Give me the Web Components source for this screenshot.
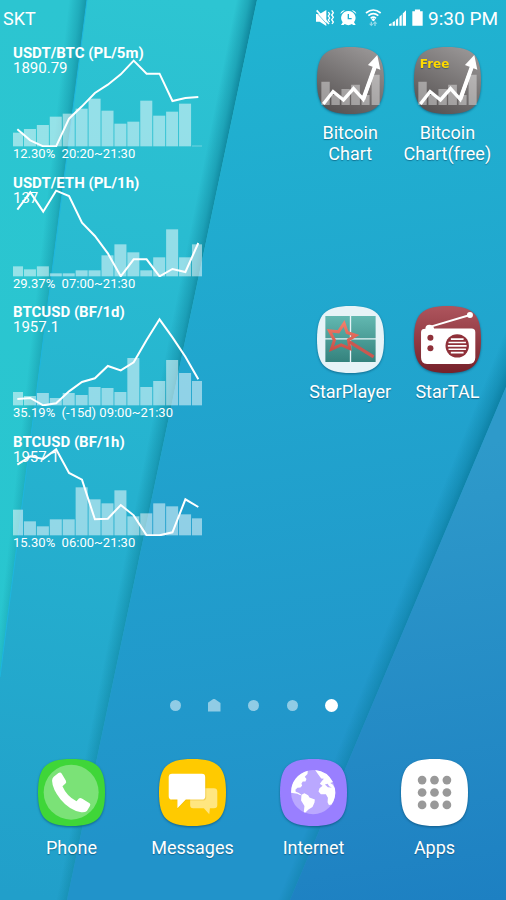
<!DOCTYPE html>
<html lang="en">
<head>
<meta charset="utf-8">
<meta name="viewport" content="width=device-width, initial-scale=1">
<title>Home</title>
<style>
body {
	margin: 0;
	font-family: Roboto, "Liberation Sans", sans-serif;
	color: white;
}
</style>
</head>
<body>
<home-screen>
	<home-wallpaper slot="wallpaper"></home-wallpaper>
	<status-bar slot="status" carrier="SKT" time="9:30 PM"></status-bar>

	<chart-widget style="grid-area: 1 / 1 / 2 / 3"
		bars="41 52 64 89 98 113 143 107 68 74 137 92 104 128 2"
		line="51 18 0 0 83 120 160 185 216 257 218 218 136 145 148">
		<span slot="title">USDT/BTC (PL/5m)</span>
		<span slot="price">1890.79</span>
		<span slot="range">12.30%&nbsp; 20:20~21:30</span>
	</chart-widget>
	<chart-widget style="grid-area: 2 / 1 / 3 / 3"
		bars="30 21 30 9 9 18 18 63 96 72 18 57 141 57 96"
		line="200 252 194 257 241 161 121 69 0 51 51 0 22 13 100">
		<span slot="title">USDT/ETH (PL/1h)</span>
		<span slot="price">137</span>
		<span slot="range">29.37%&nbsp; 07:00~21:30</span>
	</chart-widget>
	<chart-widget style="grid-area: 3 / 1 / 4 / 3"
		bars="40 28 37 22 37 31 55 52 40 142 55 73 136 97 73"
		line="19 22 0 6 42 70 81 118 105 129 196 258 204 146 78">
		<span slot="title">BTCUSD (BF/1d)</span>
		<span slot="price">1957.1</span>
		<span slot="range">35.19%&nbsp; (-15d) 09:00~21:30</span>
	</chart-widget>
	<chart-widget style="grid-area: 4 / 1 / 5 / 3"
		bars="77 42 27 48 48 144 108 96 135 57 66 96 87 63 51"
		line="212 237 229 258 187 167 48 50 91 60 0 0 9 108 85">
		<span slot="title">BTCUSD (BF/1h)</span>
		<span slot="price">1957.1</span>
		<span slot="range">15.30%&nbsp; 06:00~21:30</span>
	</chart-widget>

	<app-icon icon="chart" style="grid-area: 1 / 4">Bitcoin<br>Chart</app-icon>
	<app-icon icon="chartFree" style="grid-area: 1 / 5">Bitcoin<br>Chart(free)</app-icon>
	<app-icon icon="star" style="grid-area: 3 / 4">StarPlayer</app-icon>
	<app-icon icon="radio" style="grid-area: 3 / 5">StarTAL</app-icon>

	<page-indicator slot="pages" count="5" home="2" current="5"></page-indicator>

	<app-icon slot="dock" icon="phone">Phone</app-icon>
	<app-icon slot="dock" icon="messages">Messages</app-icon>
	<app-icon slot="dock" icon="internet">Internet</app-icon>
	<app-icon slot="dock" icon="apps">Apps</app-icon>
</home-screen>

<script>
const template = (html) => {
	const element = document.createElement("template")
	element.innerHTML = html
	return element
}

const templateScreen = template(`
<style>
:host {
	display: grid;
	min-height: 100vh;
	overflow: hidden;
}

.layer {
	grid-area: 1 / 1;
	display: grid;
	min-width: 0;
}

.content {
	grid-template-rows: auto 1fr 42px 174px;
	z-index: 1;
}

main {
	display: grid;
	grid-template-columns: repeat(5, minmax(0, 1fr));
	grid-template-rows: repeat(5, minmax(129px, 1fr));
	padding: 0 10px;
}

nav {
	--label-gap: 11px;
	display: grid;
	grid-template-columns: repeat(4, minmax(0, 1fr));
	padding: 22px 11px 0;
}
</style>
<div class="layer"><slot name="wallpaper"></slot></div>
<div class="layer content">
	<slot name="status"></slot>
	<main><slot></slot></main>
	<slot name="pages"></slot>
	<nav><slot name="dock"></slot></nav>
</div>
`)

// folded paper sheets, each one dropping a shadow on the sheet to its left
const templateWallpaper = template(`
<style>
:host {
	display: grid;
	contain: size;
}

svg {
	width: 100%;
	height: 100%;
}
</style>
<svg viewBox="0 0 506 900" preserveAspectRatio="none" aria-hidden="true">
	<defs>
		<linearGradient id="sheet1" gradientUnits="userSpaceOnUse" x1="0" y1="0" x2="0" y2="680">
			<stop offset="0" stop-color="#2cc5d1"/>
			<stop offset="1" stop-color="#28c6cf"/>
		</linearGradient>
		<linearGradient id="sheet2" gradientUnits="userSpaceOnUse" x1="180" y1="0" x2="60" y2="900">
			<stop offset="0" stop-color="#2dc5d2"/>
			<stop offset=".45" stop-color="#26b5d0"/>
			<stop offset="1" stop-color="#219fca"/>
		</linearGradient>
		<linearGradient id="sheet3" gradientUnits="userSpaceOnUse" x1="300" y1="0" x2="420" y2="800">
			<stop offset="0" stop-color="#20b4d1"/>
			<stop offset="1" stop-color="#2193ca"/>
		</linearGradient>
		<linearGradient id="sheet4" gradientUnits="userSpaceOnUse" x1="440" y1="450" x2="510" y2="900">
			<stop offset="0" stop-color="#2e9aca"/>
			<stop offset="1" stop-color="#1d80c2"/>
		</linearGradient>
		<linearGradient id="shade1" gradientUnits="userSpaceOnUse" x1="87" y1="0" x2="69" y2="-2">
			<stop offset="0" stop-color="#0b8297" stop-opacity=".7"/>
			<stop offset=".4" stop-color="#0b8297" stop-opacity=".35"/>
			<stop offset="1" stop-color="#0b8297" stop-opacity="0"/>
		</linearGradient>
		<linearGradient id="shade2" gradientUnits="userSpaceOnUse" x1="257" y1="0" x2="237" y2="-4">
			<stop offset="0" stop-color="#097a92" stop-opacity=".85"/>
			<stop offset=".4" stop-color="#097a92" stop-opacity=".4"/>
			<stop offset="1" stop-color="#097a92" stop-opacity="0"/>
		</linearGradient>
		<linearGradient id="shade3" gradientUnits="userSpaceOnUse" x1="506" y1="387" x2="486" y2="379">
			<stop offset="0" stop-color="#08789a" stop-opacity=".8"/>
			<stop offset=".4" stop-color="#08789a" stop-opacity=".4"/>
			<stop offset="1" stop-color="#08789a" stop-opacity="0"/>
		</linearGradient>
	</defs>
	<path fill="url(#sheet1)" d="M0 0H90V700H0Z"/>
	<path fill="url(#shade1)" d="M87 0L0 677L-24 677L63 0Z"/>
	<path fill="url(#sheet2)" d="M87 0H260V900H-29Z"/>
	<path stroke="#1eb6de" stroke-width="1" d="M87 0L0 677"/>
	<path fill="url(#shade2)" d="M257 0L67 900H41L231 0Z"/>
	<path fill="url(#sheet3)" d="M257 0H506V900H67Z"/>
	<path fill="url(#shade3)" d="M669 0L290 900H262L641 0Z"/>
	<path fill="url(#sheet4)" d="M506 387V900H290Z"/>
</svg>
`)

const templateStatus = template(`
<style>
:host {
	display: flex;
	align-items: center;
	height: 36px;
	padding: 0 8px 0 3px;
	font-size: 18px;
}

[data-carrier] {
	margin-right: auto;
}

[data-time] {
	font-size: 19px;
}

.icons {
	display: flex;
	gap: 6px;
	margin-right: 5px;
}

svg {
	height: 18px;
	fill: white;
}
</style>
<span data-carrier></span>
<div class="icons">
	<svg viewBox="0 0 54 54" width="18" role="img" aria-label="Vibrate">
		<path d="M0 15H11L31 3V51L11 38H0Z"/>
		<path d="M0 9L35 48" stroke="#20b0d1" stroke-width="2"/>
		<path d="M2 4L39 45" stroke="white" stroke-width="5"/>
		<path d="M37 9l4 6l-4 6l4 6l-4 6l4 6M47 4l5 7l-5 7l5 7l-5 7l5 7l-4 6" fill="none" stroke="white" stroke-width="4"/>
	</svg>
	<svg viewBox="0 0 51 54" width="17" role="img" aria-label="Alarm">
		<path d="M25 6a21 21 0 0 1 17 34l5 8h-8l-3-3a21 21 0 0 1-22 0l-3 3H3l5-8A21 21 0 0 1 25 6Z"/>
		<path d="M1 15Q4 4 15 4ZM49 15Q46 4 35 4Z"/>
		<path d="M25 15V29H35" fill="none" stroke="#20b0d1" stroke-width="4"/>
	</svg>
	<svg viewBox="0 0 60 54" width="20" role="img" aria-label="Wi-Fi">
		<path d="M9 12Q31-6 53 12M16 20Q31 8 46 20M23 28Q31 21 39 28" fill="none" stroke="white" stroke-width="5"/>
		<path d="M31 27l6 5l-6 5l-6-5Z"/>
		<path d="M25 38V45M36 43V51" stroke="#90d8e8" stroke-width="4"/>
		<path d="M18 44h14l-7 8ZM29 44h14l-7-8Z" fill="#90d8e8"/>
	</svg>
	<svg viewBox="0 0 52 54" width="17" role="img" aria-label="Signal">
		<path d="M0 51V46L8 43V51ZM11 51V40L18 36V51ZM21 51V33L28 27V51ZM32 51V23L39 16V51ZM42 51V13L52 3V51Z"/>
	</svg>
	<svg viewBox="0 0 34 54" width="11" role="img" aria-label="Battery">
		<path d="M1 6H9V1H25V6H33V51H1Z"/>
	</svg>
</div>
<time data-time></time>
`)

const templateChart = template(`
<style>
:host {
	display: grid;
	grid-template-rows: 102px 14px;
	align-content: start;
	padding: 9px 2px 0 3px;
}

.header {
	grid-area: 1 / 1;
	z-index: 1;
}

.title {
	font-size: 15px;
	line-height: 16px;
	font-weight: bold;
}

.price {
	font-size: 15px;
	line-height: 15px;
}

.range {
	font-size: 13px;
	line-height: 13px;
	white-space: nowrap;
}

svg {
	grid-area: 1 / 1;
	align-self: end;
	width: 100%;
	height: 90px;
}

rect {
	fill: white;
	fill-opacity: .5;
}

polyline {
	fill: none;
	stroke: white;
	stroke-width: 6;
}
</style>
<div class="header">
	<div class="title"><slot name="title"></slot></div>
	<div class="price"><slot name="price"></slot></div>
</div>
<svg viewBox="0 0 567 270" preserveAspectRatio="none" aria-hidden="true">
	<g data-bars></g>
	<polyline data-line></polyline>
</svg>
<div class="range"><slot name="range"></slot></div>
`)

const templateApp = template(`
<style>
:host {
	display: block;
	min-width: 0;
}

button {
	display: flex;
	flex-direction: column;
	align-items: center;
	gap: var(--label-gap, 8px);
	width: 100%;
	padding: 11px 0 0;
	border: 0;
	background: none;
	color: inherit;
	font: inherit;
	font-size: 18px;
	line-height: 21px;
	text-shadow: 0 1px 1px rgb(0 60 90 / .5);
	cursor: pointer;
}

svg {
	width: 67px;
	height: 67px;
	overflow: visible;
	filter: drop-shadow(0 1px 1px rgb(0 50 80 / .5));
}

span {
	white-space: nowrap;
}
</style>
<button type="button">
	<svg viewBox="0 0 200 200" aria-hidden="true"></svg>
	<span><slot></slot></span>
</button>
`)

const templatePages = template(`
<style>
:host {
	display: flex;
	justify-content: center;
	align-items: center;
	gap: 25px;
}

button {
	display: grid;
	place-items: center;
	width: 14px;
	height: 14px;
	padding: 0;
	border: 0;
	background: none;
	cursor: pointer;
}

button::before {
	content: '';
	width: 11px;
	height: 11px;
	border-radius: 50%;
	background: white;
	opacity: .5;
}

.home::before {
	width: 13px;
	height: 13px;
	border-radius: 0;
	clip-path: polygon(50% 0, 100% 35%, 100% 100%, 0 100%, 0 35%);
}

.current::before {
	width: 13px;
	height: 13px;
	opacity: 1;
}
</style>
`)

const squircle = (fill) =>
	`<path fill="${fill}" d="M100 0C176 0 200 24 200 100S176 200 100 200S0 176 0 100S24 0 100 0Z"/>`

const chartArt = `
<defs><linearGradient id="bg" x1=".8" y1="0" x2=".3" y2="1">
	<stop offset="0" stop-color="#9a9797"/><stop offset="1" stop-color="#575353"/>
</linearGradient></defs>
${squircle("url(#bg)")}
<path fill="white" fill-opacity=".4" d="M13 104H38V173H13ZM43 143H68V173H43ZM73 125H98V173H73ZM102 113H128V173H102ZM133 143H157V173H133ZM163 83H187V173H163Z"/>
<path fill="none" stroke="white" stroke-width="10" d="M19 170L48 133L79 158L109 124L138 156L174 56"/>
<path fill="white" d="M180 24L189 68L152 54Z"/>
<path fill="none" stroke="white" stroke-width="12" d="M138 156L173 58"/>
`

const icons = {
	chart: chartArt,
	chartFree: `${chartArt}
<text x="17" y="64" fill="#ffd900" font-family="DejaVu Sans, sans-serif" font-weight="bold" font-size="36">Free</text>`,
	star: `
<defs><linearGradient id="tile" x1="0" y1="0" x2="0" y2="1">
	<stop offset="0" stop-color="#62b8b1"/><stop offset="1" stop-color="#34827d"/>
</linearGradient>
<linearGradient id="wand" x1="0" y1="0" x2="0" y2="1">
	<stop offset="0" stop-color="#f37d68"/><stop offset="1" stop-color="#ca5149"/>
</linearGradient></defs>
${squircle("#e6f3f7")}
<path fill="url(#tile)" d="M25 30H98V96H25ZM102 30H175V96H102ZM25 100H98V167H25ZM102 100H175V167H102Z"/>
<path fill="none" stroke="url(#wand)" stroke-width="9" d="M81 52L90 79L116 88L94 101L98 127L72 116L43 129L52 102L37 74L64 77Z"/>
<path stroke="#cb5850" stroke-width="10" d="M97 107L169 152"/>`,
	radio: `
<defs><linearGradient id="bg" x1="0" y1="0" x2="0" y2="1">
	<stop offset="0" stop-color="#ae555d"/><stop offset="1" stop-color="#76212a"/>
</linearGradient></defs>
${squircle("url(#bg)")}
<path stroke="white" stroke-width="6" d="M45 63L167 27"/>
<circle cx="167" cy="27" r="9" fill="white"/>
<path fill="white" d="M34 68Q34 56 46 56Q57 56 60 67H172Q183 67 183 78V154Q183 173 164 173H39Q21 173 21 154V78Q21 68 34 68Z"/>
<g fill="#8f3039"><circle cx="49" cy="95" r="9"/><circle cx="49" cy="126" r="9"/><circle cx="129" cy="119" r="35"/></g>
<path stroke="white" stroke-width="5" d="M110 99H148M103 109H155M101 119H157M103 129H155M110 139H148"/>`,
	phone: `
${squircle("#3fd638")}
<circle cx="99" cy="99" r="82" fill="#7be277"/>
<path fill="white" d="M61 42Q67 38 71 44L83 64Q86 70 82 73L73 81Q86 111 115 126L122 118Q126 115 131 118L154 132Q158 135 155 140L146 155Q141 160 129 159Q94 153 67 120Q43 90 42 65Q42 58 47 53Z"/>`,
	messages: `
${squircle("#ffca00")}
<path fill="#ffe680" d="M103 87H164Q174 87 174 97V138Q174 147 164 147H152L150 165L134 147H102Q93 147 93 138V97Z"/>
<path fill="#dfa900" fill-opacity=".35" d="M39 47H130Q141 47 141 57V114Q141 124 130 124H80L55 150V124H39Z"/>
<path fill="white" d="M39 44H128Q138 44 138 54V111Q138 121 128 121H80L55 147V121H39Q29 121 29 111V54Q29 44 39 44Z"/>`,
	internet: `
${squircle("#997fff")}
<circle cx="99" cy="99" r="66" fill="#baa8ff"/>
<g fill="white">
	<path d="M33 99A66 66 0 0 1 83 35L82 45L74 53L79 60L76 67L68 67L64 73L66 80L61 85L52 86L46 92L47 98L55 101L63 106L61 108L52 104L33 101Z"/>
	<path d="M64 107L73 102L84 108L88 115L104 121L103 130L97 143L85 151L76 160L71 159L73 140L63 124Z"/>
	<path d="M105 33A66 66 0 0 1 158 69L150 72L158 77L164 88A66 66 0 0 1 154 136L146 137L142 129L143 116L137 105L122 105L115 97L118 87L127 80L119 74L125 66L131 59L123 58L117 50L111 42Z"/>
</g>
<path fill="#baa8ff" d="M134 76L142 74L147 81L155 85L143 84Z"/>`,
	apps: `
${squircle("white")}
<g fill="#999">${[63, 100, 137].map((y) =>
	[63, 100, 137].map((x) => `<circle cx="${x}" cy="${y}" r="13"/>`).join("")).join("")}</g>`,
}

class BaseElement extends HTMLElement {
	constructor(content) {
		super()
		this.attachShadow({ mode: "open" })
		this.shadowRoot.appendChild(content.content.cloneNode(true))
	}

	find(selector) {
		return this.shadowRoot.querySelector(selector)
	}
}

class HomeScreen extends BaseElement {
	constructor() {
		super(templateScreen)
	}
}

class HomeWallpaper extends BaseElement {
	constructor() {
		super(templateWallpaper)
	}
}

class StatusBar extends BaseElement {
	constructor() {
		super(templateStatus)
	}

	connectedCallback() {
		this.find("[data-carrier]").textContent = this.getAttribute("carrier")
		this.find("[data-time]").textContent = this.getAttribute("time")
	}
}

class ChartWidget extends BaseElement {
	constructor() {
		super(templateChart)
	}

	values(name) {
		return this.getAttribute(name).split(" ").map(Number)
	}

	connectedCallback() {
		const base = 268
		const step = 38.7
		// first and last bars are cut by the edge of the chart
		this.find("[data-bars]").innerHTML = this.values("bars")
			.map((h, i) => `<rect x="${i * step - 6}" y="${base - h}" width="36" height="${h}"/>`)
			.join("")
		this.find("[data-line]").setAttribute("points", this.values("line")
			.map((h, i) => `${i * step + 13},${base - h}`)
			.join(" "))
	}
}

class AppIcon extends BaseElement {
	constructor() {
		super(templateApp)
	}

	connectedCallback() {
		this.find("svg").innerHTML = icons[this.getAttribute("icon")]
	}
}

class PageIndicator extends BaseElement {
	constructor() {
		super(templatePages)
	}

	connectedCallback() {
		const home = Number(this.getAttribute("home"))
		const current = Number(this.getAttribute("current"))
		for (let i = 1; i <= Number(this.getAttribute("count")); i++) {
			const button = document.createElement("button")
			button.type = "button"
			button.ariaLabel = `Page ${i}`
			button.classList.toggle("home", i === home)
			button.classList.toggle("current", i === current)
			this.shadowRoot.appendChild(button)
		}
	}
}

customElements.define("home-screen", HomeScreen)
customElements.define("home-wallpaper", HomeWallpaper)
customElements.define("status-bar", StatusBar)
customElements.define("chart-widget", ChartWidget)
customElements.define("app-icon", AppIcon)
customElements.define("page-indicator", PageIndicator)
</script>
</body>
</html>
